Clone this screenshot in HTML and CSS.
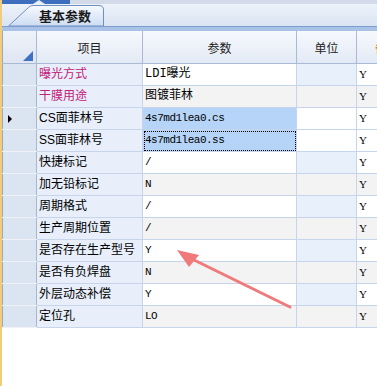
FILE: index.html
```html
<!DOCTYPE html>
<html>
<head>
    <title>基本参数</title>
    <link rel="stylesheet" href="styles.css">
</head>
<body>
    <div class="app">
        <div class="topstrip">
            <div class="topstrip-blue"><span class="notch"></span></div>
        </div>
        <div class="tabbar">
            <div class="tab">
                <svg class="tab-shape" width="97" height="22" viewBox="0 0 97 22">
                    <defs>
                        <linearGradient id="tabfill" x1="0" y1="0" x2="0" y2="1">
                            <stop offset="0" stop-color="#f7faff"/>
                            <stop offset="1" stop-color="#cddcf2"/>
                        </linearGradient>
                    </defs>
                    <path d="M0.5 22 L20.5 3.5 Q22 1.5 25 1.5 L91 1.5 Q95.5 1.5 95.5 6 L95.5 22 Z"
                          fill="url(#tabfill)" stroke="#7090c0" stroke-width="1"/>
                </svg>
                <span class="tab-label">基本参数</span>
            </div>
        </div>
        <div class="band"></div>
        <table class="grid">
            <colgroup>
                <col class="c-head">
                <col class="c-item">
                <col class="c-param">
                <col class="c-unit">
                <col class="c-more">
            </colgroup>
            <thead>
                <tr>
                    <th class="corner"><span class="corner-mark"></span></th>
                    <th>项目</th>
                    <th>参数</th>
                    <th>单位</th>
                    <th class="more"><span>备</span></th>
                </tr>
            </thead>
            <tbody>
                <tr class="odd">
                    <td class="rh"></td>
                    <td class="item pink">曝光方式</td>
                    <td class="param">LDI曝光</td>
                    <td class="unit"></td>
                    <td class="flag">Y</td>
                </tr>
                <tr class="even">
                    <td class="rh"></td>
                    <td class="item pink">干膜用途</td>
                    <td class="param">图镀菲林</td>
                    <td class="unit"></td>
                    <td class="flag">Y</td>
                </tr>
                <tr class="sel">
                    <td class="rh"><span class="marker"></span></td>
                    <td class="item">CS面菲林号</td>
                    <td class="param code">4s7md1lea0.cs</td>
                    <td class="unit"></td>
                    <td class="flag">Y</td>
                </tr>
                <tr class="sel">
                    <td class="rh"></td>
                    <td class="item">SS面菲林号</td>
                    <td class="param code focus">4s7md1lea0.ss</td>
                    <td class="unit"></td>
                    <td class="flag">Y</td>
                </tr>
                <tr class="odd">
                    <td class="rh"></td>
                    <td class="item">快捷标记</td>
                    <td class="param code">/</td>
                    <td class="unit"></td>
                    <td class="flag">Y</td>
                </tr>
                <tr class="even">
                    <td class="rh"></td>
                    <td class="item">加无铅标记</td>
                    <td class="param code">N</td>
                    <td class="unit"></td>
                    <td class="flag">Y</td>
                </tr>
                <tr class="odd">
                    <td class="rh"></td>
                    <td class="item">周期格式</td>
                    <td class="param code">/</td>
                    <td class="unit"></td>
                    <td class="flag">Y</td>
                </tr>
                <tr class="even">
                    <td class="rh"></td>
                    <td class="item">生产周期位置</td>
                    <td class="param code">/</td>
                    <td class="unit"></td>
                    <td class="flag">Y</td>
                </tr>
                <tr class="odd">
                    <td class="rh"></td>
                    <td class="item">是否存在生产型号</td>
                    <td class="param code">Y</td>
                    <td class="unit"></td>
                    <td class="flag">Y</td>
                </tr>
                <tr class="even">
                    <td class="rh"></td>
                    <td class="item">是否有负焊盘</td>
                    <td class="param code">N</td>
                    <td class="unit"></td>
                    <td class="flag">Y</td>
                </tr>
                <tr class="odd">
                    <td class="rh"></td>
                    <td class="item">外层动态补偿</td>
                    <td class="param code">Y</td>
                    <td class="unit"></td>
                    <td class="flag">Y</td>
                </tr>
                <tr class="even">
                    <td class="rh"></td>
                    <td class="item">定位孔</td>
                    <td class="param code">LO</td>
                    <td class="unit"></td>
                    <td class="flag">Y</td>
                </tr>
            </tbody>
        </table>
        <!-- annotation arrow drawn over the grid -->
        <svg class="arrow" width="377" height="386" viewBox="0 0 377 386">
            <line x1="192" y1="259" x2="290" y2="307" stroke="#f07a7a" stroke-width="3" stroke-linecap="round"/>
            <polygon points="177,250 199,255 189,267" fill="#f07a7a"/>
        </svg>
    </div>
</body>
</html>
```

FILE: styles.css
```css
body {
    margin: 0;
    background-color: #ffffff;
    font-family: "Liberation Sans", "Noto Sans CJK SC", sans-serif;
    font-size: 12px;
    color: #000000;
}
.app {
    position: relative;
    width: 375px;
    height: 386px;
    overflow: hidden;
    border-left: 2px solid #f2cc78;
}
.topstrip {
    height: 4px;
    background-color: #d3dbe8;
}
.topstrip-blue {
    position: relative;
    width: 68px;
    height: 4px;
    background-color: #3d6fbe;
}
.notch {
    position: absolute;
    left: 31px;
    top: 0;
    border-left: 6px solid transparent;
    border-right: 6px solid transparent;
    border-bottom: 4px solid #e8eef8;
}
.tabbar {
    height: 22px;
    padding-left: 6px;
    background: linear-gradient(#edf2f9, #dae4f3);
}
.tab {
    position: relative;
    width: 97px;
    height: 22px;
}
.tab-shape {
    position: absolute;
    left: 0;
    top: 0;
}
.tab-label {
    position: relative;
    display: block;
    padding: 5px 0 0 31px;
    font-family: "Noto Sans CJK SC", sans-serif;
    font-size: 13px;
    font-weight: bold;
    line-height: 14px;
    color: #1a1a1a;
}
.band {
    height: 4px;
    border-top: 1px solid #7f9ccb;
    background-color: #a9c2e7;
}
.grid {
    border-collapse: collapse;
    table-layout: fixed;
    width: 400px;
    border-left: 1px solid #9aa9bf;
}
.c-head { width: 34px; }
.c-item { width: 106px; }
.c-param { width: 154px; }
.c-unit { width: 60px; }
.c-more { width: 46px; }
.grid th {
    height: 32px;
    padding: 0;
    font-family: "Noto Sans CJK SC", sans-serif;
    font-size: 12px;
    font-weight: normal;
    color: #222222;
    background: linear-gradient(#f6f8fc, #e3eaf5);
    border-right: 1px solid #a8bad6;
    border-bottom: 1px solid #a8bad6;
    text-align: center;
}
.grid th.corner {
    position: relative;
    background: linear-gradient(#eef2f9, #dfe6f2);
}
.corner-mark {
    position: absolute;
    right: 3px;
    bottom: 2px;
    border-left: 10px solid transparent;
    border-bottom: 10px solid #3f72c4;
}
.grid th.more {
    text-align: left;
    color: #b8681c;
}
.grid th.more span {
    padding-left: 18px;
}
.grid td {
    height: 21px;
    padding: 0 0 0 2px;
    border-right: 1px solid #c6d5ec;
    border-bottom: 1px solid #c6d5ec;
    white-space: nowrap;
    overflow: hidden;
    line-height: 21px;
    font-family: "Liberation Serif", "Noto Sans CJK SC", serif;
}
.grid td.rh {
    position: relative;
    background-color: #dbe4f1;
    border-right: 1px solid #a6b7d1;
    border-bottom: 1px solid #eef2f8;
}
.marker {
    position: absolute;
    left: 5px;
    top: 7px;
    border-top: 4px solid transparent;
    border-bottom: 4px solid transparent;
    border-left: 4px solid #000000;
}
.grid td.item {
    background-color: #e8effa;
    font-family: "Liberation Sans", "Noto Sans CJK SC", sans-serif;
}
.grid td.pink {
    color: #c0207a;
}
.grid td.param {
    font-family: "Liberation Mono", "Noto Sans CJK SC", monospace;
}
.grid td.code {
    font-size: 11px;
    letter-spacing: -0.5px;
}
.grid td.flag {
    font-size: 11px;
}
.odd td.param, .odd td.flag {
    background-color: #ffffff;
}
.even td.param, .even td.flag, .even td.unit {
    background-color: #f3f3f3;
}
.odd td.unit {
    background-color: #e8f0fb;
}
.sel td.param {
    background-color: #b5d4f7;
}
.sel td.unit, .sel td.flag {
    background-color: #ffffff;
}
.grid td.focus {
    outline: 1px dotted #000000;
    outline-offset: -2px;
}
.arrow {
    position: absolute;
    left: -2px;
    top: 0;
    pointer-events: none;
}
```
